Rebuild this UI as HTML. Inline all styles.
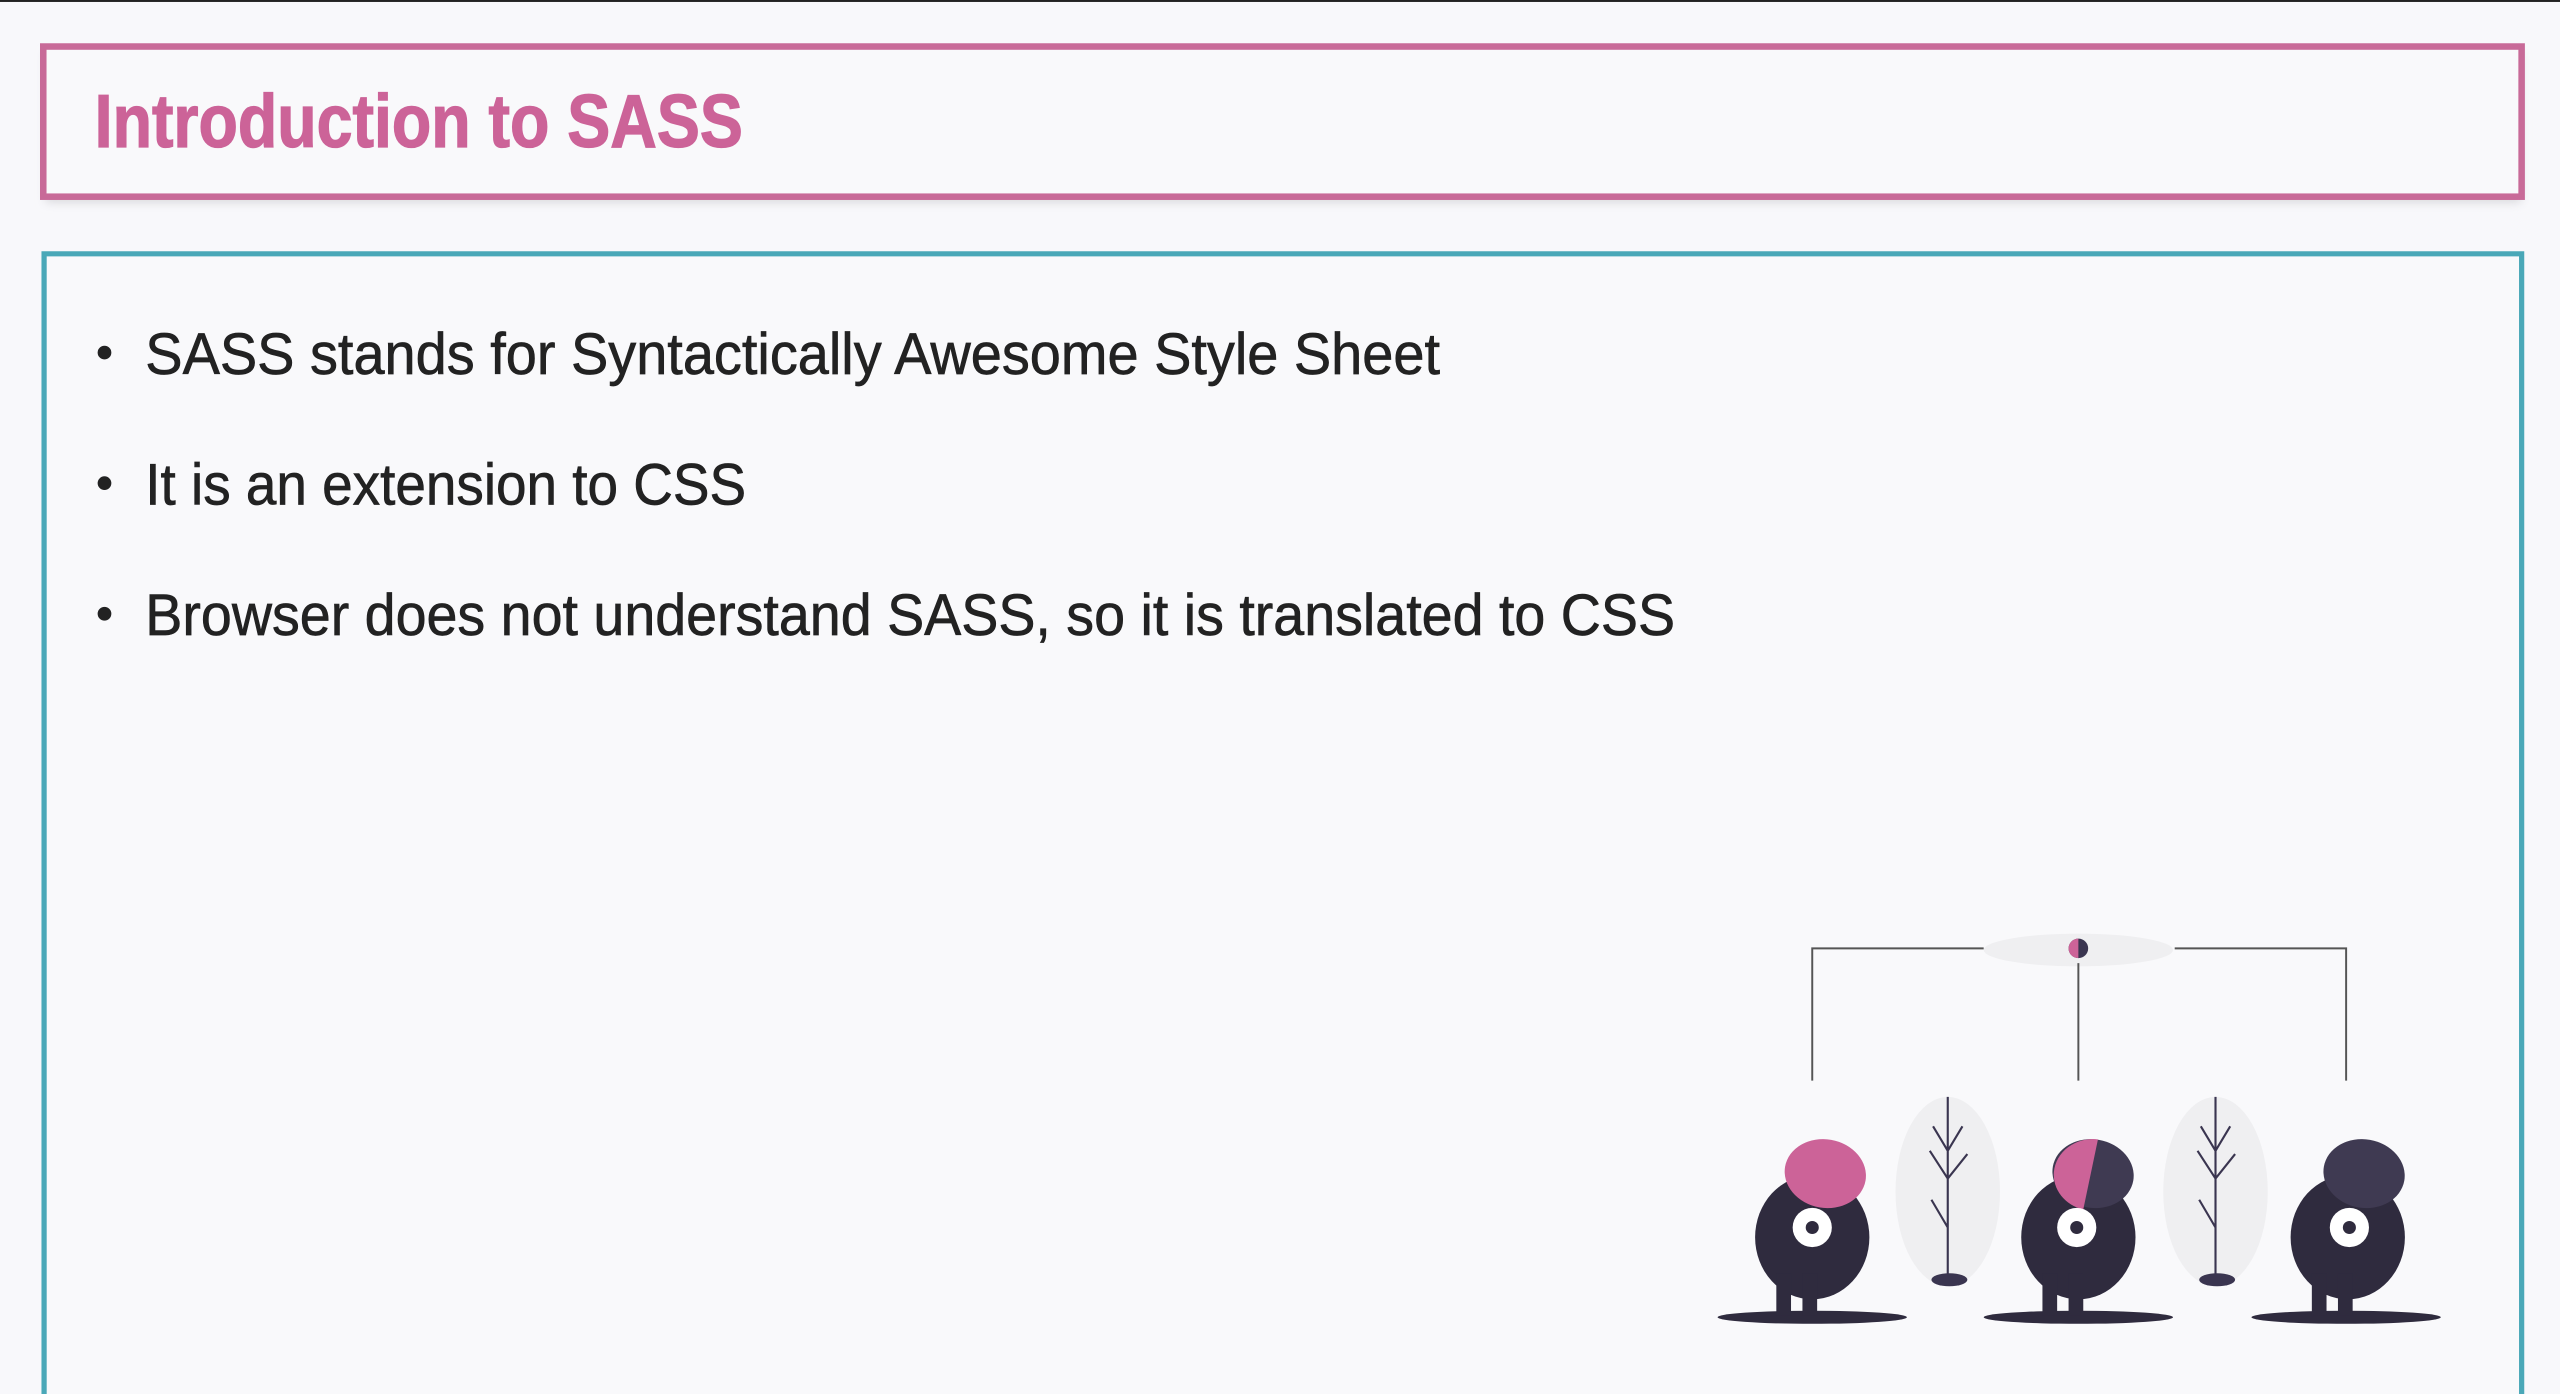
<!DOCTYPE html>
<html><head><meta charset="utf-8"><style>
html,body{margin:0;padding:0;background:#f8f8fb;overflow:hidden}
svg{display:block}
</style></head><body>
<svg width="2560" height="1394" viewBox="0 0 1568 854" preserveAspectRatio="none" xmlns="http://www.w3.org/2000/svg">
<defs>
<filter id="sh" x="-5%" y="-20%" width="110%" height="160%"><feGaussianBlur stdDeviation="3"/></filter>
</defs>
<rect width="1568" height="854" fill="#f8f8fb"/>
<rect x="0" y="0" width="1568" height="1.2" fill="#222"/>
<rect x="28" y="32" width="1516" height="92" fill="#d8d8dc" filter="url(#sh)"/>
<rect x="26.5" y="28.5" width="1518" height="92" fill="#f9f9fb" stroke="#c86a98" stroke-width="4"/>
<text x="58" y="90" font-family="Liberation Sans, sans-serif" font-weight="bold" font-size="46" fill="#cc6398" stroke="#cc6398" stroke-width="0.8" textLength="397" lengthAdjust="spacingAndGlyphs">Introduction to SASS</text>
<path d="M27 856 V155.5 H1544.5 V856" fill="#f9f9fb" stroke="#4aa8b8" stroke-width="3.2"/>
<g font-family="Liberation Sans, sans-serif" font-size="36" fill="#222" stroke="#222" stroke-width="0.4">
<circle cx="64" cy="216" r="4" fill="#222"/>
<text x="89" y="229" textLength="793" lengthAdjust="spacingAndGlyphs">SASS stands for Syntactically Awesome Style Sheet</text>
<circle cx="64" cy="296" r="4" fill="#222"/>
<text x="89" y="309" textLength="368" lengthAdjust="spacingAndGlyphs">It is an extension to CSS</text>
<circle cx="64" cy="376" r="4" fill="#222"/>
<text x="89" y="389" textLength="937" lengthAdjust="spacingAndGlyphs">Browser does not understand SASS, so it is translated to CSS</text>
</g>
<!-- illustration -->
<ellipse cx="1273" cy="582" rx="58" ry="10" fill="#efeff1"/>
<path d="M1110 662 V581 H1215 M1332 581 H1437 V662 M1273 590 V662" fill="none" stroke="#555" stroke-width="1.2"/>
<ellipse cx="1273" cy="581" rx="6" ry="6" fill="#3a3550"/>
<path d="M1273 575 A6 6 0 0 0 1273 587 Z" fill="#cc6398"/>
<g>
<ellipse cx="1193" cy="730" rx="32" ry="58" fill="#efeff1"/>
<ellipse cx="1357" cy="730" rx="32" ry="58" fill="#efeff1"/>
<path d="M1193 672 V782 M1193 705 L1184 690 M1193 705 L1202 690 M1193 722 L1182 705 M1193 722 L1205 707 M1193 752 L1183 735 M1357 672 V782 M1357 705 L1348 690 M1357 705 L1366 690 M1357 722 L1346 705 M1357 722 L1369 707 M1357 752 L1347 735" stroke="#3a3550" stroke-width="1.3" fill="none"/>
<ellipse cx="1194" cy="784" rx="11" ry="4" fill="#3a3550"/>
<ellipse cx="1358" cy="784" rx="11" ry="4" fill="#3a3550"/>
</g>
<g fill="#2f2b3e">
<ellipse cx="1110" cy="807" rx="58" ry="4"/>
<ellipse cx="1273" cy="807" rx="58" ry="4"/>
<ellipse cx="1437" cy="807" rx="58" ry="4"/>
<ellipse cx="1110" cy="758" rx="35" ry="38"/>
<ellipse cx="1273" cy="758" rx="35" ry="38"/>
<ellipse cx="1438" cy="758" rx="35" ry="38"/>
<rect x="1088" y="780" width="9" height="26"/><rect x="1104" y="780" width="9" height="26"/>
<rect x="1251" y="780" width="9" height="26"/><rect x="1267" y="780" width="9" height="26"/>
<rect x="1416" y="780" width="9" height="26"/><rect x="1432" y="780" width="9" height="26"/>
</g>
<ellipse cx="1118" cy="719" rx="25" ry="21" fill="#cc6398" transform="rotate(10 1118 719)"/>
<ellipse cx="1282" cy="719" rx="25" ry="21" fill="#3f3a52" transform="rotate(10 1282 719)"/>
<path d="M1285 698 L1276 741 A24 22 0 0 1 1258 718 A24 22 0 0 1 1285 698 Z" fill="#cc6398"/>
<ellipse cx="1448" cy="719" rx="25" ry="21" fill="#3f3a52" transform="rotate(10 1448 719)"/>
<g fill="#fff"><circle cx="1110" cy="752" r="12"/><circle cx="1272" cy="752" r="12"/><circle cx="1439" cy="752" r="12"/></g>
<g fill="#2f2b3e"><circle cx="1110" cy="752" r="4"/><circle cx="1272" cy="752" r="4"/><circle cx="1439" cy="752" r="4"/></g>
</svg>
</body></html>
